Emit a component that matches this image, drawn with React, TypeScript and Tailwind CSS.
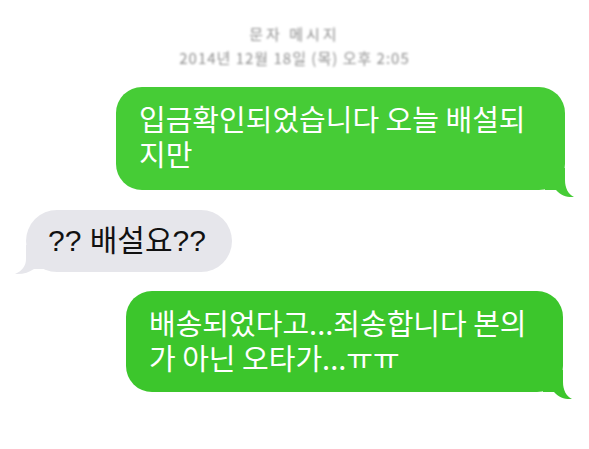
import React from "react";

const KR = { fontFamily: '"Noto Sans CJK KR", "Noto Sans", sans-serif' };
const KR2 = { fontFamily: '"Liberation Sans", "Noto Sans CJK KR", sans-serif' };

function TailRight({ color }: { color: string }) {
  return (
    <svg
      className="absolute right-[-10px] bottom-[-8px]"
      width="30"
      height="30"
      viewBox="0 0 30 30"
    >
      <path
        d="M0,0 L20,0 L20,12 C20,20 23,26 29,29 C22,29.5 16,27.5 11,22 L0,22 Z"
        fill={color}
      />
    </svg>
  );
}

function TailLeft({ color }: { color: string }) {
  return (
    <svg
      className="absolute left-[-11px] bottom-[-3px]"
      width="30"
      height="30"
      viewBox="0 0 30 30"
    >
      <path
        d="M30,0 L11,0 L11,14 C11,21 7,26 0,29 C8,29.5 14,27.5 19,24 L30,24 Z"
        fill={color}
      />
    </svg>
  );
}

export default function App() {
  return (
    <div className="w-[589px] h-[449px] bg-white overflow-hidden flex flex-col">
      <div
        className="flex flex-col items-center pt-[22px] text-[#8f8f8f] text-[15px] leading-[24px] blur-[1.3px]"
        style={KR}
      >
        <div className="tracking-[3px]">문자 메시지</div>
        <div className="tracking-[1px]">2014년 12월 18일 (목) 오후 2:05</div>
      </div>

      <div className="flex flex-col mt-[17px]">
        <div className="self-end mr-[24px] relative">
          <div
            className="relative w-[449px] h-[103px] rounded-[26px] bg-[#46cc36] text-white text-[29px] leading-[35px] pl-[23px] pt-[14px]"
            style={KR}
          >
            <TailRight color="#46cc36" />
            <div className="relative">
              입금확인되었습니다 오늘 배설되
              <br />
              지만
            </div>
          </div>
        </div>

        <div className="self-start ml-[26px] mt-[20px] relative">
          <div
            className="relative w-[206px] h-[62px] rounded-[31px] bg-[#e6e6eb] text-[#111] text-[30px] leading-[62px] pl-[22px]"
            style={KR2}
          >
            <TailLeft color="#e6e6eb" />
            <div className="relative">?? 배설요??</div>
          </div>
        </div>

        <div className="self-end mr-[26px] mt-[19px] relative">
          <div
            className="relative w-[437px] h-[101px] rounded-[26px] bg-[#3cc62c] text-white text-[29px] leading-[35px] pl-[23px] pt-[14px]"
            style={KR}
          >
            <TailRight color="#3cc62c" />
            <div className="relative">
              배송되었다고...죄송합니다 본의
              <br />
              가 아닌 오타가...ㅠㅠ
            </div>
          </div>
        </div>
      </div>
    </div>
  );
}
